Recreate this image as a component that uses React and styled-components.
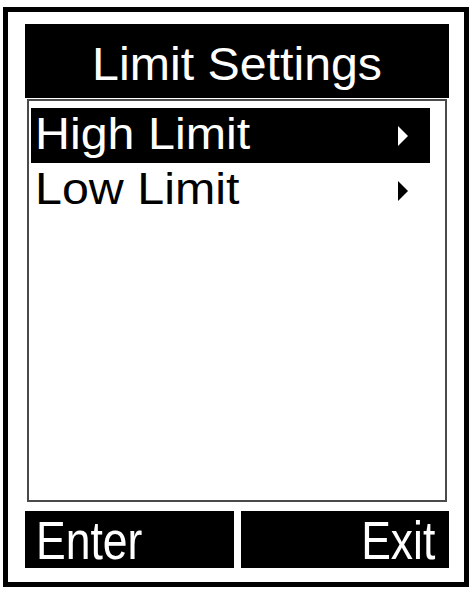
import React from "react";
import styled, { createGlobalStyle } from "styled-components";

const GlobalStyle = createGlobalStyle`
  html, body {
    margin: 0;
    padding: 0;
    background: #fff;
  }
  body {
    font-family: "Liberation Sans", Arial, sans-serif;
  }
`;

const Device = styled.div`
  box-sizing: border-box;
  width: 466px;
  height: 580px;
  margin: 7px 0 0 3px;
  border: 5px solid #000;
  padding: 12px 15px 14px 17px;
  display: flex;
  flex-direction: column;
  background: #fff;
`;

const TitleBar = styled.div`
  height: 74px;
  box-sizing: border-box;
  padding-top: 6px;
  background: #000;
  color: #fff;
  text-align: center;
  font-size: 46px;
  line-height: 68px;
  white-space: nowrap;
`;

// lcd text is a bit wider / narrower than plain Arial
const Stretch = styled.span`
  display: inline-block;
  transform: scaleX(${(p) => p.$x});
  transform-origin: ${(p) => p.$origin || "center"};
`;

const MenuBox = styled.div`
  flex: 1;
  margin: 1px 2px 0;
  border: 2px solid #4a4a4a;
  padding: 7px 15px 0 2px;
  display: flex;
  flex-direction: column;
`;

const MenuRow = styled.div`
  height: 55px;
  box-sizing: border-box;
  padding: 0 22px 4px 4px;
  display: flex;
  align-items: center;
  justify-content: space-between;
  background: ${(p) => (p.$active ? "#000" : "transparent")};
  color: ${(p) => (p.$active ? "#fff" : "#000")};
  font-size: 44px;
  line-height: 50px;
  white-space: nowrap;
`;

const Arrow = styled.svg`
  width: 10px;
  height: 20px;
  margin-top: 4px;
  flex-shrink: 0;
`;

const Footer = styled.div`
  margin-top: 9px;
  height: 57px;
  display: grid;
  grid-template-columns: 1fr 1fr;
  gap: 7px;
`;

const SoftKey = styled.div`
  background: #000;
  color: #fff;
  box-sizing: border-box;
  padding: 3px ${(p) => (p.$right ? "14px" : "0")} 0 ${(p) => (p.$right ? "0" : "11px")};
  text-align: ${(p) => (p.$right ? "right" : "left")};
  font-size: 53px;
  line-height: 54px;
  white-space: nowrap;
`;

const items = [
  { label: "High Limit", active: true },
  { label: "Low Limit", active: false },
];

export default function App() {
  return (
    <>
      <GlobalStyle />
      <Device>
        <TitleBar>
          <Stretch $x={1.05}>Limit Settings</Stretch>
        </TitleBar>
        <MenuBox>
          {items.map((item) => (
            <MenuRow key={item.label} $active={item.active}>
              <Stretch $x={1.1} $origin="left">
                {item.label}
              </Stretch>
              <Arrow viewBox="0 0 10 20">
                <path d="M0 0 L10 10 L0 20 Z" fill="currentColor" />
              </Arrow>
            </MenuRow>
          ))}
        </MenuBox>
        <Footer>
          <SoftKey>
            <Stretch $x={0.84} $origin="left">
              Enter
            </Stretch>
          </SoftKey>
          <SoftKey $right>
            <Stretch $x={0.84} $origin="right">
              Exit
            </Stretch>
          </SoftKey>
        </Footer>
      </Device>
    </>
  );
}
